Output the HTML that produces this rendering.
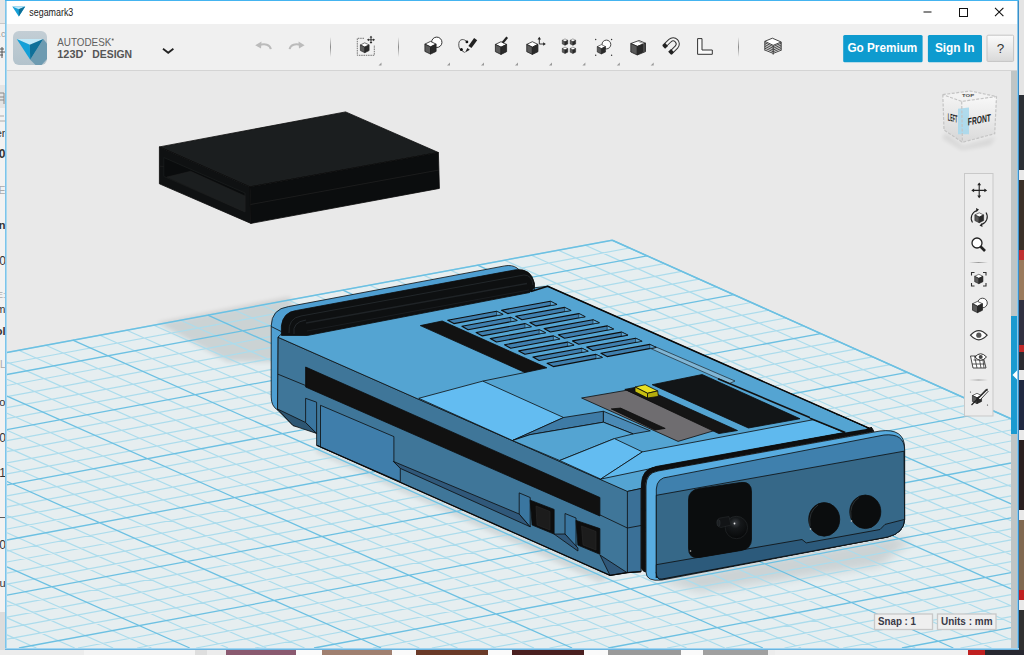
<!DOCTYPE html>
<html><head><meta charset="utf-8"><style>
html,body{margin:0;padding:0;width:1024px;height:655px;overflow:hidden;background:#e8e8e8;}
svg{position:absolute;left:0;top:0;}
text{font-family:"Liberation Sans",sans-serif;}
</style></head><body>
<svg width="1024" height="655" viewBox="0 0 1024 655">
<rect x="0" y="0" width="5" height="23" fill="#e6e6e6"/>
<rect x="0" y="23" width="5" height="1" fill="#c8c8c8"/>
<rect x="0" y="24" width="5" height="625" fill="#f2f2f2"/>
<rect x="1019" y="0" width="5" height="95" fill="#e4e4e4"/>
<rect x="1019" y="95" width="5" height="75" fill="#2b2f35"/>
<rect x="1019" y="180" width="5" height="70" fill="#3a3028"/>
<rect x="1019" y="250" width="5" height="10" fill="#c03030"/>
<rect x="1019" y="260" width="5" height="40" fill="#9a7a5c"/>
<rect x="1019" y="300" width="5" height="45" fill="#303040"/>
<rect x="1019" y="345" width="5" height="7" fill="#c02828"/>
<rect x="1019" y="352" width="5" height="18" fill="#2a2a30"/>
<rect x="1019" y="380" width="5" height="50" fill="#202840"/>
<rect x="1019" y="440" width="5" height="70" fill="#2a2020"/>
<rect x="1019" y="520" width="5" height="70" fill="#806850"/>
<rect x="1019" y="590" width="5" height="10" fill="#c02020"/>
<rect x="1019" y="610" width="5" height="45" fill="#303030"/>
<rect x="0" y="650" width="1024" height="5" fill="#ececec"/>
<rect x="84" y="650" width="111" height="5" fill="#f4f4f4"/>
<rect x="195" y="650" width="12" height="5" fill="#dedede"/>
<rect x="226" y="650" width="70" height="5" fill="#8a5a70"/>
<rect x="296" y="650" width="26" height="5" fill="#fafafa"/>
<rect x="322" y="650" width="70" height="5" fill="#a08070"/>
<rect x="392" y="650" width="24" height="5" fill="#fafafa"/>
<rect x="416" y="650" width="72" height="5" fill="#6a3a28"/>
<rect x="488" y="650" width="24" height="5" fill="#fafafa"/>
<rect x="512" y="650" width="72" height="5" fill="#4a2020"/>
<rect x="584" y="650" width="24" height="5" fill="#fafafa"/>
<rect x="608" y="650" width="73" height="5" fill="#9a9a9a"/>
<rect x="681" y="650" width="22" height="5" fill="#fafafa"/>
<rect x="703" y="650" width="65" height="5" fill="#a0a0a0"/>
<rect x="775" y="650" width="193" height="5" fill="#f0f0f0"/>
<rect x="968" y="650" width="17" height="5" fill="#c02020"/>
<rect x="985" y="650" width="39" height="5" fill="#282830"/>
<rect x="0" y="85" width="5" height="23" fill="#e4e4e4"/>
<rect x="0" y="612" width="5" height="38" fill="#dcdcdc"/>
<g font-family="Liberation Sans" text-anchor="end">
<text x="5.5" y="37" font-size="9" fill="#9a9a9a">.c</text>
<path d="M0 49H4M0 52H5M0 55H3M2 47V58" stroke="#555" stroke-width="1" fill="none"/>
<path d="M0 93H4V104M0 97H4M0 100H4" stroke="#888" stroke-width="1" fill="none"/>
<path d="M0 116H4M0 121H5" stroke="#aaa" stroke-width="1" fill="none"/>
<text x="5.5" y="137" font-size="11" fill="#333">er</text>
<text x="5.5" y="158" font-size="12" font-weight="bold" fill="#333">0</text>
<text x="5.5" y="194" font-size="10" fill="#aaa">E</text>
<text x="5.5" y="229" font-size="11" font-weight="bold" fill="#333">n</text>
<text x="6" y="265" font-size="12" fill="#333">00</text>
<text x="5.5" y="298" font-size="9" fill="#aaa">E:</text>
<text x="5.5" y="313" font-size="11" fill="#333">m</text>
<text x="5.5" y="335" font-size="11" font-weight="bold" fill="#333">ol</text>
<text x="5.5" y="368" font-size="10" fill="#aaa">FL</text>
<text x="5.5" y="406" font-size="11" fill="#333">bo</text>
<text x="6" y="442" font-size="12" fill="#333">60</text>
<text x="6" y="477" font-size="12" fill="#333">01</text>
<text x="5.5" y="516" font-size="11" fill="#333">2_</text>
<text x="6" y="549" font-size="12" fill="#333">00</text>
<text x="5.5" y="587" font-size="11" fill="#333">u</text>
</g>

<rect x="5" y="0" width="1014" height="650" fill="#f0f0f0"/>
<rect x="7" y="1" width="1010" height="23" fill="#ffffff"/>
<rect x="7" y="24" width="1010" height="46" fill="#f0f0f0"/>
<rect x="7" y="70" width="1010" height="1" fill="#d4d4d4"/>
<rect x="7" y="71" width="1004" height="577" fill="#e9e9e9"/>
<path d="M7 352.4L612.2 240.2L1011.0 418.8L1011 648L7 648Z" fill="#e6eef0"/>
<defs>
<filter id="blur3" x="-20%" y="-20%" width="140%" height="140%"><feGaussianBlur stdDeviation="2.5"/></filter>
<filter id="blur5" x="-20%" y="-50%" width="140%" height="200%"><feGaussianBlur stdDeviation="5"/></filter>
<clipPath id="gridclip"><path d="M7 352.4L612.2 240.2L1011.0 418.8L1011 648L7 648Z"/></clipPath>
</defs>
<path d="M157 323L290 297L300 330L282 362L227.5 361.5Z" fill="#000" opacity="0.11" filter="url(#blur3)"/>
<g clip-path="url(#gridclip)">
<path d="M655 580L890 536L912 540L880 566L700 592Z" fill="#000" opacity="0.11" filter="url(#blur5)"/>
<path d="M316 447L610 577L600 582L316 452Z" fill="#000" opacity="0.10" filter="url(#blur3)"/>
</g>

<path d="M612.2 240.2L7.0 352.4M629.6 248.0L7.0 363.5M664.4 263.6L7.0 385.5M681.7 271.3L7.0 396.6M699.1 279.1L7.0 407.6M716.5 286.9L7.0 418.6M751.2 302.5L7.0 440.7M768.6 310.2L7.0 451.7M786.0 318.0L7.0 462.8M803.3 325.8L7.0 473.8M838.0 341.3L7.0 495.9M855.4 349.1L7.0 506.9M872.7 356.9L7.0 517.9M890.1 364.6L7.0 529.0M924.7 380.2L7.0 551.0M942.1 387.9L7.0 562.0M959.4 395.7L7.0 573.1M976.7 403.4L7.0 584.1M1011.0 419.0L7.0 606.1M1011.0 430.0L7.0 617.2M1011.0 441.0L7.0 628.2M1011.0 452.0L7.0 639.2M1011.0 473.9L78.0 648.0M1011.0 484.9L137.1 648.0M1011.0 495.9L196.1 648.0M1011.0 506.9L255.0 648.0M1011.0 528.8L372.9 648.0M1011.0 539.8L431.8 648.0M1011.0 550.8L490.7 648.0M1011.0 561.7L549.5 648.0M1011.0 583.7L667.1 648.0M1011.0 594.7L725.8 648.0M1011.0 605.6L784.5 648.0M1011.0 616.6L843.2 648.0M1011.0 638.5L960.5 648.0M585.3 245.2L1011.0 435.8M558.4 250.2L1011.0 452.8M531.4 255.2L1011.0 469.8M504.5 260.2L1011.0 486.8M450.6 270.2L1011.0 520.8M423.6 275.2L1011.0 537.8M396.7 280.2L1011.0 554.8M369.7 285.2L1011.0 571.8M315.8 295.2L1011.0 605.8M288.8 300.2L1011.0 622.8M261.8 305.2L1011.0 639.8M234.8 310.2L991.4 648.0M180.8 320.2L915.3 648.0M153.8 325.2L877.2 648.0M126.8 330.2L839.1 648.0M99.8 335.2L801.0 648.0M45.7 345.2L724.8 648.0M18.7 350.2L686.6 648.0M7.0 362.1L648.5 648.0M7.0 379.2L610.3 648.0M7.0 413.3L534.0 648.0M7.0 430.3L495.8 648.0M7.0 447.4L457.5 648.0M7.0 464.5L419.3 648.0M7.0 498.6L342.8 648.0M7.0 515.6L304.6 648.0M7.0 532.7L266.3 648.0M7.0 549.7L228.0 648.0M7.0 583.8L151.4 648.0M7.0 600.9L113.1 648.0M7.0 617.9L74.7 648.0M7.0 634.9L36.4 648.0" stroke="#acdcec" stroke-width="1.25" fill="none"/>
<path d="M647.0 255.8L7.0 374.5M733.9 294.7L7.0 429.7M820.7 333.6L7.0 484.8M907.4 372.4L7.0 540.0M994.0 411.2L7.0 595.1M1011.0 463.0L18.9 648.0M1011.0 517.8L314.0 648.0M1011.0 572.7L608.3 648.0M1011.0 627.6L901.9 648.0M612.2 240.2L1011.0 418.8M477.5 265.2L1011.0 503.8M342.8 290.2L1011.0 588.8M207.8 315.2L953.3 648.0M72.8 340.2L762.9 648.0M7.0 396.2L572.1 648.0M7.0 481.5L381.1 648.0M7.0 566.8L189.7 648.0" stroke="#6cc0e2" stroke-width="1.3" fill="none"/>
<path d="M612.2 240.2L7.0 352.4M612.2 240.2L1011.0 418.8" stroke="#6cc0e2" stroke-width="1.5" fill="none"/>

<g stroke="#0d0d0d" stroke-width="0.8" stroke-linejoin="round">
<!-- black box -->
<path d="M159.4 146.9L345.6 111.9L438.4 152.5L250 186.9Z" fill="#1b1e1f"/>
<path d="M159.4 146.9L250 186.9L250.9 223.4L159.4 183.8Z" fill="#0f1112"/>
<path d="M250 186.9L438.4 152.5L439.4 188.4L250.9 223.4Z" fill="#0b0d0e"/>
<path d="M163.8 157.5L245 193L245 211.9L163.8 176.4Z" fill="#0a0c0d" stroke="#1e2122" stroke-width="0.6"/>
<path d="M167 177L190.6 171.3L245 196L245 211.9Z" fill="#1b1e1f" stroke="#222" stroke-width="0.5"/>
<path d="M159.4 166.2L163.8 166.5" fill="none" stroke="#222" stroke-width="0.6"/>
<path d="M250.5 204.5L439 170" fill="none" stroke="#222" stroke-width="0.7"/>
</g>
<g stroke="#0d0d0d" stroke-width="0.8" stroke-linejoin="round">
<!-- side face (long side) -->
<path d="M277.9 337.2L627.4 491.1L641 488L641 572L627.4 572.6L610 575.4L316.6 445.2L316.6 433.4L305.6 427.3L293.1 425.6L277.5 410Z" fill="#3f7699"/>
<!-- rim side band left -->
<!-- crease -->
<path d="M277.5 374L305.6 385.5" fill="none"/>
<path d="M599.9 514.9L627.4 528" fill="none"/>
<!-- black stripe side -->
<path d="M305.6 367L599.9 497.5L599.9 516L305.6 387Z" fill="#111"/>
<!-- left bottom chamfer -->
<path d="M277.5 409L293.1 425.6L316.6 433.4L305.6 422.5Z" fill="#2d5673"/>
<!-- left recess -->
<path d="M305.6 398.3L316.6 402.2L316.6 433.4L305.6 422.5Z" fill="#3a76a0"/>
<path d="M320.5 405.3L393.9 436.6L393.9 461.4L400.3 468.4L400.3 481.7L320.5 447Z" fill="#3f7eab"/>
<path d="M393.3 461.4L400.3 468.4L530.2 526.8L519.2 514Z" fill="#30587a"/>
<!-- port frames & ports -->
<path d="M519.2 492.9L530.2 497.5L530.2 526.8L519.2 514Z" fill="#3a76a0"/>
<path d="M565 513.5L576 518L576 548L565 534Z" fill="#3a76a0"/>
<path d="M554.1 534.1L565 534L577.9 548L577.9 551Z" fill="#30587a"/>
<path d="M600 555L627 572.6L610 575.4Z" fill="#30587a"/>
<path d="M530.2 500.2L554.1 509.4L554.1 534.1L532.1 525Z" fill="#0d0d0d"/>
<path d="M576 520.4L599.9 528.6L599.9 554.3L577.9 545.1Z" fill="#0d0d0d"/>
<path d="M536 506L550 511.5L550 530L537 525Z" fill="#1c1c1c" stroke="#2a2a2a" stroke-width="0.6"/>
<path d="M581.5 526L596 531.5L596 550L583 545Z" fill="#1c1c1c" stroke="#2a2a2a" stroke-width="0.6"/>
<!-- top surface -->
<path d="M277.9 337.2L290 316L547.7 286.25L869 428.3L650 468.75L641 488.5L627.4 491.4Z" fill="#54a4d2"/>
<!-- black stripe top -->
<path d="M420.3 325.6L442.2 321L546.9 367.8L525 372.5Z" fill="#121212"/>
<!-- light insert 1 -->
<path d="M418.75 398.3L482.8 381.1L563.6 417.5L512.5 440.5Z" fill="#63bcf1"/>
<path d="M482.8 381.1L525 372.5" fill="none"/>
<!-- pocket -->
<path d="M563.6 417.5L603.4 411.25L603.4 422.2L530 434.7L512.5 440.5Z" fill="#3e7ba6"/>
<path d="M603.4 411.25L650.3 430.8L633.1 433.9L603.4 422.2Z" fill="#4a8ab6"/>
<path d="M530 434.7L603.4 422.2L633.1 433.9L614.4 438.6L559.7 460.5L512.5 440.5Z" fill="#54a4d2"/>
<!-- light insert 2 -->
<path d="M559.7 460.5L614.4 438.6L642.5 451.9L600.7 479.1Z" fill="#63bcf1"/>
<!-- light front strip -->
<path d="M600.7 479.1L642.4 451.9L838.8 414.9L869 428.3L869 431L650 468.75Z" fill="#5fb9ee"/>
<!-- gray panel -->
<path d="M581.6 398L626.9 390.2L716.25 430L678.1 441.4Z" fill="#6f6d70"/>
<path d="M611.25 408.9L620.6 408.1L665.2 428.4L655 430Z" fill="#151515"/>
<path d="M624.8 389.4L640 386.5L737.5 430.5L718.75 433.6Z" fill="#151515"/>
<!-- black panel -->
<path d="M652.2 384.7L702.2 374.5L800 418.75L748.4 428Z" fill="#121517"/>
<!-- side raised strip along right edge -->
<path d="M650.6 348.5L656 347L735 381L729.5 383.5Z" fill="#80b6d6" stroke-width="0.6"/>
<!-- yellow button -->
<path d="M635 387L645.2 384.7L657.7 390.9L647.5 393.3Z" fill="#e8e020"/>
<path d="M635 387L647.5 393.3L647.5 398L635 391.7Z" fill="#c8c010"/>
<path d="M647.5 393.3L657.7 390.9L658.4 396.4L647.5 398Z" fill="#b4ac0c"/>
</g>

<g stroke="#0d0d0d" stroke-width="0.8" stroke-linejoin="round">
<!-- rim -->
<path d="M277.5 410Q271.2 406 271.2 397L271.2 326Q271.5 309 288.4 306.6L504.7 265.9Q512 264.5 517 268L534 283L534.4 290L281.4 334L277.9 337.2Z" fill="#4f9fd2"/>
<path d="M271.2 326.5L281.4 331.6" fill="none"/>
<!-- rail -->
<path d="M281.4 335.4L281.4 326Q283 312 296.25 310.5L515.6 269.8Q531 268 534.4 283.1L534.4 287.8L529.7 292.5L307.2 335.5Z" fill="#0e1011"/>
<path d="M289 333Q288 318 301 316L524 275Q532 275 533 285" fill="none" stroke="#22272a" stroke-width="1"/>
<path d="M306 323L527 283.5" fill="none" stroke="#1f2326" stroke-width="1.4"/>
<path d="M307 331L529 290" fill="none" stroke="#1a1d20" stroke-width="1"/>
<path d="M294 334Q292 322 306 320" fill="none" stroke="#2a2f33" stroke-width="0.8"/>
<path d="M447.7 320.2L496.6 311.3L502.8 314.4L453.9 323.6Z" fill="#3f7fae" stroke-width="1.1"/>
<path d="M496.6 311.3L502.8 314.4L496.6 315.4Z" fill="#5aa9da" stroke-width="0.5"/>
<path d="M501.5 310.2L550.4 301.3L556.6 304.4L507.7 313.6Z" fill="#3f7fae" stroke-width="1.1"/>
<path d="M550.4 301.3L556.6 304.4L550.4 305.4Z" fill="#5aa9da" stroke-width="0.5"/>
<path d="M461.9 326.3L510.8 317.4L517.0 320.5L468.1 329.7Z" fill="#3f7fae" stroke-width="1.1"/>
<path d="M510.8 317.4L517.0 320.5L510.8 321.5Z" fill="#5aa9da" stroke-width="0.5"/>
<path d="M515.7 316.3L564.6 307.4L570.8 310.5L521.9 319.7Z" fill="#3f7fae" stroke-width="1.1"/>
<path d="M564.6 307.4L570.8 310.5L564.6 311.5Z" fill="#5aa9da" stroke-width="0.5"/>
<path d="M476.1 332.5L525.0 323.6L531.2 326.7L482.3 335.9Z" fill="#3f7fae" stroke-width="1.1"/>
<path d="M525.0 323.6L531.2 326.7L525.0 327.7Z" fill="#5aa9da" stroke-width="0.5"/>
<path d="M529.9 322.5L578.8 313.6L585.0 316.7L536.1 325.9Z" fill="#3f7fae" stroke-width="1.1"/>
<path d="M578.8 313.6L585.0 316.7L578.8 317.7Z" fill="#5aa9da" stroke-width="0.5"/>
<path d="M490.3 338.6L539.2 329.8L545.4 332.8L496.5 342.0Z" fill="#3f7fae" stroke-width="1.1"/>
<path d="M539.2 329.8L545.4 332.8L539.2 333.8Z" fill="#5aa9da" stroke-width="0.5"/>
<path d="M544.1 328.6L593.0 319.8L599.2 322.8L550.3 332.0Z" fill="#3f7fae" stroke-width="1.1"/>
<path d="M593.0 319.8L599.2 322.8L593.0 323.8Z" fill="#5aa9da" stroke-width="0.5"/>
<path d="M504.5 344.8L553.4 335.9L559.6 339.0L510.7 348.2Z" fill="#3f7fae" stroke-width="1.1"/>
<path d="M553.4 335.9L559.6 339.0L553.4 340.0Z" fill="#5aa9da" stroke-width="0.5"/>
<path d="M558.3 334.8L607.2 325.9L613.4 329.0L564.5 338.2Z" fill="#3f7fae" stroke-width="1.1"/>
<path d="M607.2 325.9L613.4 329.0L607.2 330.0Z" fill="#5aa9da" stroke-width="0.5"/>
<path d="M518.7 350.9L567.6 342.1L573.8 345.1L524.9 354.3Z" fill="#3f7fae" stroke-width="1.1"/>
<path d="M567.6 342.1L573.8 345.1L567.6 346.1Z" fill="#5aa9da" stroke-width="0.5"/>
<path d="M572.5 340.9L621.4 332.1L627.6 335.1L578.7 344.3Z" fill="#3f7fae" stroke-width="1.1"/>
<path d="M621.4 332.1L627.6 335.1L621.4 336.1Z" fill="#5aa9da" stroke-width="0.5"/>
<path d="M532.9 357.1L581.8 348.2L588.0 351.3L539.1 360.5Z" fill="#3f7fae" stroke-width="1.1"/>
<path d="M581.8 348.2L588.0 351.3L581.8 352.3Z" fill="#5aa9da" stroke-width="0.5"/>
<path d="M586.7 347.1L635.6 338.2L641.8 341.3L592.9 350.5Z" fill="#3f7fae" stroke-width="1.1"/>
<path d="M635.6 338.2L641.8 341.3L635.6 342.3Z" fill="#5aa9da" stroke-width="0.5"/>
<path d="M547.1 363.2L596.0 354.4L602.2 357.4L553.3 366.6Z" fill="#3f7fae" stroke-width="1.1"/>
<path d="M596.0 354.4L602.2 357.4L596.0 358.4Z" fill="#5aa9da" stroke-width="0.5"/>
<path d="M600.9 353.2L649.8 344.4L656.0 347.4L607.1 356.6Z" fill="#3f7fae" stroke-width="1.1"/>
<path d="M649.8 344.4L656.0 347.4L649.8 348.4Z" fill="#5aa9da" stroke-width="0.5"/>
<!-- front: body front short face -->
<path d="M627.4 491.4L641 488.5L641 571.5L627.4 572.6Z" fill="#3a7097"/>
<path d="M627.4 528L641 525.5" fill="none"/>
<!-- gasket black -->
<path d="M641.4 568L641.4 484Q642 468.5 656 467L872 428L874 431.5L658 471Q645.6 473 645.6 486L645.6 572Q643 572 641.4 568Z" fill="#0e0f10"/>
<!-- front face outer -->
<path d="M646 572L646 486Q646 473 658 471L880 431Q904.6 428 904.6 448L904.6 519.4Q904 533 887.6 537L662 580Q646 582 646 572Z" fill="#58ace0"/>
<!-- frame band -->
<path d="M656.3 578L656.3 489Q657 477.5 668.75 476.9L884 435Q904.6 433 904.6 450L904.6 519.4Q904 533 887.6 537L662 579Q656.3 580 656.3 572Z" fill="#3f80ad"/>
<!-- inner face -->
<path d="M656.3 495.3L904 451.2L904.6 519.4Q904 533 887.6 537L662 579Q656.3 580 656.3 572Z" fill="#366888"/>
<!-- bottom bevel -->
<path d="M656.3 564.7L802 539.5L806.2 542.9L880 529.5L885 524.4L904.6 519.4Q904 533 887.6 537L662 579Q656.3 580 656.3 572Z" fill="#2c5a7b"/>
<!-- joystick housing -->
<path d="M699.5 488.5L740.5 482.5Q751.5 481 751.5 492L751.5 539Q751.5 549 741 550.5L699 557.5Q688.5 559 688.5 548L688.5 500Q688.5 490 699.5 488.5Z" fill="#0b0d0e"/>
<defs><radialGradient id="ballG" cx="0.45" cy="0.3" r="0.7"><stop offset="0" stop-color="#3a3e42"/><stop offset="0.35" stop-color="#15181a"/><stop offset="1" stop-color="#070809"/></radialGradient></defs>
<circle cx="736.4" cy="527.5" r="11.2" fill="url(#ballG)" stroke="#2c3033" stroke-width="0.5"/>
<path d="M717.5 523.5Q716 519 720 518L729 516.5L731 525L721 527.5Q718.5 528 717.5 523.5Z" fill="#121416" stroke="#2a2e31" stroke-width="0.5"/>
<ellipse cx="718.5" cy="523" rx="1.6" ry="3.3" fill="#1c1f22" stroke="#3a3e41" stroke-width="0.4"/>
<circle cx="734.5" cy="523.5" r="0.9" fill="#e8e8e8" stroke="none"/>
<circle cx="690.5" cy="551" r="0.8" fill="#bbb" stroke="none"/>
<!-- buttons -->
<ellipse cx="824.2" cy="519.4" rx="15.5" ry="16.8" fill="#0b0d0e"/><path d="M810 526Q808 512 818 505" fill="none" stroke="#3a3f42" stroke-width="0.7"/><circle cx="810.5" cy="529" r="0.8" fill="#ccc" stroke="none"/>
<ellipse cx="865.3" cy="511.8" rx="15.5" ry="16.8" fill="#0b0d0e"/><path d="M851 518Q849 504 859 497.5" fill="none" stroke="#3a3f42" stroke-width="0.7"/><circle cx="851.5" cy="521" r="0.8" fill="#ccc" stroke="none"/>
<!-- front top band -->
<path d="M650 468.75L869 428.3L872 427.5L656 466.5Z" fill="#111"/>
</g>
<path d="M531 291.5L547.7 286.25L869 428.3" fill="none" stroke="#0a0a0a" stroke-width="1.5" stroke-linejoin="round"/>
<path d="M316.6 445.2L610 575.4L627.4 572.6L641 571.5" fill="none" stroke="#0a0a0a" stroke-width="1.2"/>
<path d="M718 378.8L845.3 432.5" fill="none" stroke="#111" stroke-width="1.6"/>
<path d="M810 403.5L867.7 428.8L845.3 432.5L810 418.2Z" fill="#54a4d2" stroke="none"/>
<path d="M810 418.2L845.3 432.5" fill="none" stroke="#111" stroke-width="1.6"/>

<defs>
<symbol id="cube" viewBox="0 0 12 13.5" overflow="visible">
<path d="M6 0.4L11.6 3.1L6 5.9L0.4 3.1Z" fill="#fff" stroke="#222" stroke-width="0.8" stroke-linejoin="round"/>
<path d="M0.4 3.1L6 5.9L6 13.1L0.4 10.4Z" fill="#5a5a5a" stroke="#222" stroke-width="0.8" stroke-linejoin="round"/>
<path d="M11.6 3.1L6 5.9L6 13.1L11.6 10.4Z" fill="#2a2a2a" stroke="#222" stroke-width="0.8" stroke-linejoin="round"/>
</symbol>
<linearGradient id="logoG" x1="0" y1="0" x2="0" y2="1"><stop offset="0" stop-color="#c3ced5"/><stop offset="1" stop-color="#b3c3cc"/></linearGradient>
<linearGradient id="qG" x1="0" y1="0" x2="0" y2="1"><stop offset="0" stop-color="#fbfbfb"/><stop offset="1" stop-color="#d9d9d9"/></linearGradient>
<linearGradient id="sepG" x1="0" y1="0" x2="0" y2="1"><stop offset="0" stop-color="#f0f0f0"/><stop offset="0.5" stop-color="#8a8a8a"/><stop offset="1" stop-color="#f0f0f0"/></linearGradient>
<linearGradient id="nsepG" x1="0" y1="0" x2="1" y2="0"><stop offset="0" stop-color="#ececec"/><stop offset="0.5" stop-color="#9a9a9a"/><stop offset="1" stop-color="#ececec"/></linearGradient>
</defs>
<!-- title bar -->
<path d="M12.3 6.4L25.2 6.4L18.8 16.4Z" fill="#16a0d8"/>
<path d="M12.3 6.4L25.2 6.4L18.8 9.2Z" fill="#bfe6f7"/>
<path d="M25.2 6.4L18.8 9.2L18.8 16.4Z" fill="#0e6f96"/>
<text x="29.3" y="15.8" font-size="10.6" fill="#222" textLength="44" lengthAdjust="spacingAndGlyphs">segamark3</text>
<rect x="923.5" y="11.5" width="8" height="1" fill="#111"/>
<rect x="959.5" y="8.5" width="8" height="8" fill="none" stroke="#111" stroke-width="1"/>
<path d="M995 7.8L1003.4 16.2M1003.4 7.8L995 16.2" stroke="#111" stroke-width="1.1"/>
<!-- logo -->
<rect x="13" y="31" width="34" height="34" rx="6" fill="url(#logoG)"/>
<path d="M43.3 39L47 43.5L47 59L41.5 65L35.5 65L30.2 59.8Z" fill="#6e9bb1"/>
<path d="M16.7 39L43.3 39L29.8 44.8Z" fill="#c2e9f8"/>
<path d="M16.7 39L29.8 44.8L30.2 59.8Z" fill="#14a0d8"/>
<path d="M43.3 39L29.8 44.8L30.2 59.8Z" fill="#0f7099"/>
<text x="57.3" y="46.1" font-size="11.2" fill="#606060" textLength="54" lengthAdjust="spacingAndGlyphs">AUTODESK</text>
<rect x="111.8" y="38.6" width="1.8" height="1.8" fill="#666"/>
<text x="57.3" y="57.8" font-size="11.2" font-weight="bold" fill="#555" textLength="26" lengthAdjust="spacingAndGlyphs">123D</text>
<rect x="84.2" y="50.2" width="1.8" height="1.8" fill="#555"/>
<text x="92.3" y="57.8" font-size="11.2" font-weight="bold" fill="#555" textLength="39.8" lengthAdjust="spacingAndGlyphs">DESIGN</text>
<path d="M163 48.8L168.2 52.8L173.4 48.8" fill="none" stroke="#222" stroke-width="1.8"/>
<!-- undo redo -->
<path d="M270.8 49.2C270 44.5 265 43.2 258.5 45.4" fill="none" stroke="#bbb" stroke-width="2"/>
<path d="M255.2 45.2L261.5 41.6L261 48.6Z" fill="#bbb"/>
<path d="M289.6 49.2C290.4 44.5 295.4 43.2 301.9 45.4" fill="none" stroke="#bbb" stroke-width="2"/>
<path d="M304.6 45.2L298.5 41.6L299 48.6Z" fill="#bbb"/>
<rect x="330" y="37" width="1" height="20" fill="url(#sepG)"/>
<rect x="398" y="37" width="1" height="20" fill="url(#sepG)"/>
<rect x="738" y="37" width="1" height="20" fill="url(#sepG)"/>
<!-- add icon -->
<path d="M364 38.3L357.3 38.3L357.3 55.3L374.3 55.3L374.3 45" fill="none" stroke="#666" stroke-width="0.9" stroke-dasharray="1.5 0.8"/>
<use href="#cube" x="360" y="42.5" width="9.5" height="10.5"/>
<path d="M371 37L371 42.6M368.2 39.8L373.8 39.8" stroke="#333" stroke-width="1"/><path d="M371 35.8L369.6 37.6L372.4 37.6ZM371 43.8L369.6 42L372.4 42ZM367 39.8L368.8 38.4L368.8 41.2ZM375 39.8L373.2 38.4L373.2 41.2Z" fill="#222"/>
<!-- primitives -->
<circle cx="436.75" cy="42.3" r="5.2" fill="#fff" stroke="#333" stroke-width="1"/>
<use href="#cube" x="424.25" y="41" width="12.5" height="13.5"/>
<!-- sketch -->
<path d="M466.9 41.9C464.5 38.5 459.2 38.6 458.8 43.5C458.5 47 459.5 49.5 461.4 50.3L464.7 52.5" fill="none" stroke="#555" stroke-width="1"/>
<circle cx="466.9" cy="41.9" r="1.4" fill="#111"/>
<circle cx="461.4" cy="49.6" r="1.5" fill="#111"/>
<path d="M468.4 46.1L474.1 38L477.2 40.2L471.45 48.1Z" fill="#222"/>
<path d="M467.4 48.1L469.8 49.8L465.1 52.5Z" fill="#222"/>
<!-- construct -->
<use href="#cube" x="494.9" y="41.3" width="12.2" height="13.5"/>
<path d="M502.6 42.8L507.2 37.2" stroke="#222" stroke-width="2.2"/>
<!-- modify -->
<use href="#cube" x="526.1" y="41.3" width="12.5" height="13.5"/>
<path d="M539.3 44L539.3 38.5M539.3 44L544 44" stroke="#333" stroke-width="1"/>
<path d="M539.3 36.8L537.6 39.4L541 39.4Z" fill="#222"/>
<path d="M545.8 44L543.2 42.3L543.2 45.7Z" fill="#222"/>
<!-- pattern -->
<use href="#cube" x="562" y="38.6" width="6" height="7"/>
<use href="#cube" x="569.9" y="38.6" width="6" height="7"/>
<use href="#cube" x="562" y="46.8" width="6" height="7"/>
<use href="#cube" x="569.9" y="46.8" width="6" height="7"/>
<!-- grouping -->
<circle cx="595.7" cy="39.5" r="0.7" fill="#333"/><circle cx="611.6" cy="39.5" r="0.7" fill="#333"/>
<circle cx="595.7" cy="55.2" r="0.7" fill="#333"/><circle cx="611.6" cy="55.2" r="0.7" fill="#333"/>
<circle cx="606.4" cy="44.5" r="4.4" fill="#fff" stroke="#333" stroke-width="0.9"/>
<use href="#cube" x="596.6" y="44.3" width="9.6" height="10"/>
<!-- combine -->
<path d="M630.8 43.5L639 40.5L645.5 43.2L637.3 46.4Z" fill="#fff" stroke="#222" stroke-width="0.8"/>
<path d="M630.8 43.5L637.3 46.4L637.3 55L630.8 52Z" fill="#5a5a5a" stroke="#222" stroke-width="0.8"/>
<path d="M645.5 43.2L637.3 46.4L637.3 55L645.5 51.6Z" fill="#2a2a2a" stroke="#222" stroke-width="0.8"/>
<path d="M638.5 41.5L644 43.8L644 52" stroke="#777" stroke-width="0.8" fill="none"/>
<!-- snap magnet -->
<path d="M663.8 46.6L670 40.6A4.6 4.6 0 0 1 676.5 47.1L670.3 53.3" fill="none" stroke="#333" stroke-width="4.2"/>
<path d="M663.8 46.6L670 40.6A4.6 4.6 0 0 1 676.5 47.1L670.3 53.3" fill="none" stroke="#f4f4f4" stroke-width="2.2"/>
<path d="M662.3 45.8L665.2 43L668 45.9L665.1 48.7Z" fill="#222"/>
<path d="M668.2 51.8L671 49L673.9 51.9L671.1 54.7Z" fill="#222"/>
<!-- measure -->
<path d="M697.6 38.6L702 38.6L702 50L712.3 50L712.3 54.3L697.6 54.3Z" fill="#fafafa" stroke="#333" stroke-width="1"/>
<!-- layers -->
<g stroke="#333" stroke-width="0.9" fill="none">
<path d="M764.8 41.3L772.4 38.2L781.2 42L773.2 45.3Z" fill="#fff"/>
<path d="M764.8 42.8L773.2 46.6L781.2 43.3M764.8 44.6L773.2 48.3L781.2 45M764.8 46.4L773.2 50L781.2 46.7M764.8 48.2L773.2 51.7L781.2 48.5M764.8 50L773.2 53.4L781.2 50.2M764.8 41.3L764.8 50.5M773.2 45.3L773.2 54.6M781.2 42L781.2 50.5"/>
</g>
<!-- corner marks -->
<g fill="#999">
<path d="M378.5 65.5L381.5 62.5L381.5 65.5Z"/>
<path d="M447 65.5L450 62.5L450 65.5Z"/>
<path d="M481 65.5L484 62.5L484 65.5Z"/>
<path d="M515 65.5L518 62.5L518 65.5Z"/>
<path d="M549 65.5L552 62.5L552 65.5Z"/>
<path d="M582.4 65.5L585.4 62.5L585.4 65.5Z"/>
<path d="M616.8 65.5L619.8 62.5L619.8 65.5Z"/>
<path d="M650.7 65.5L653.7 62.5L653.7 65.5Z"/>
</g>
<!-- buttons -->
<rect x="843.2" y="34.9" width="79.4" height="27.3" rx="1.5" fill="#0e9bcf"/>
<text x="847.4" y="52" font-size="12.3" font-weight="bold" fill="#fff" textLength="69.9" lengthAdjust="spacingAndGlyphs">Go Premium</text>
<rect x="927.9" y="34.9" width="54.1" height="27.3" rx="1.5" fill="#0e9bcf"/>
<text x="934.9" y="52" font-size="12.3" font-weight="bold" fill="#fff" textLength="39.5" lengthAdjust="spacingAndGlyphs">Sign In</text>
<rect x="987" y="35.2" width="26.6" height="26.2" rx="1" fill="url(#qG)" stroke="#c4c4c4" stroke-width="1"/>
<text x="996.8" y="52.8" font-size="13.5" fill="#333">?</text>
<!-- right sidebar strip -->
<rect x="1011" y="71" width="7" height="577" fill="#bfc5c5"/>
<rect x="1011" y="316" width="7" height="118" fill="#1a9ad0"/>
<path d="M1012.5 375L1017 370.5L1017 379.5Z" fill="#fff"/>

<defs>
<linearGradient id="vcL" x1="0" y1="0" x2="0" y2="1"><stop offset="0" stop-color="#f4f4f4"/><stop offset="1" stop-color="#d6d6d6"/></linearGradient>
<linearGradient id="vcF" x1="0" y1="0" x2="0" y2="1"><stop offset="0" stop-color="#f8f8f8"/><stop offset="1" stop-color="#dadada"/></linearGradient>
<filter id="vcsh" x="-30%" y="-30%" width="160%" height="160%"><feGaussianBlur stdDeviation="2"/></filter>
</defs>
<!-- viewcube -->
<path d="M946 133L963 146L996 137L990 145L962 150L942 138Z" fill="#000" opacity="0.08" filter="url(#vcsh)"/>
<path d="M942.8 94.6L970.3 91L996.5 96.5L961.7 101.4Z" fill="#f2f2f2"/>
<path d="M942.8 94.6L961.7 101.4L962.4 142.3L944 130Z" fill="url(#vcL)"/>
<path d="M961.7 101.4L996.5 96.5L994.7 133.7L962.4 142.3Z" fill="url(#vcF)"/>
<path d="M958 108.7L969 107.5L969 134.3L958 134.3Z" fill="#a8d8ec" opacity="0.9"/>
<g fill="none" stroke="#c4c4c4" stroke-width="1.2" stroke-dasharray="3 1.5">
<path d="M942.8 94.6L970.3 91L996.5 96.5L961.7 101.4Z"/>
<path d="M942.8 94.6L944 130L962.4 142.3L994.7 133.7L996.5 96.5"/>
<path d="M961.7 101.4L962.4 142.3"/>
</g>
<text x="0" y="0" font-size="10" font-weight="bold" fill="#222" textLength="16" lengthAdjust="spacingAndGlyphs" transform="translate(947.8 120.5) skewY(14) scale(0.6 1.05)">LEFT</text>
<text x="0" y="0" font-size="10.5" font-weight="bold" fill="#222" textLength="23" lengthAdjust="spacingAndGlyphs" transform="translate(967.8 125.6) skewY(-11)">FRONT</text>
<text x="0" y="0" font-size="6" font-weight="bold" fill="#444" transform="translate(962 96.5) scale(1 0.5)">TOP</text>
<!-- nav bar -->
<rect x="964.5" y="173.5" width="28.5" height="242.5" fill="#ececec" stroke="#c9c9c9" stroke-width="1"/>
<rect x="969" y="262" width="19" height="1" fill="url(#nsepG)"/>
<rect x="969" y="379.5" width="19" height="1" fill="url(#nsepG)"/>
<!-- pan -->
<g stroke="#222" stroke-width="1.1" fill="#222">
<path d="M979.2 183.5L979.2 197.3M972.3 190.4L986.1 190.4" fill="none"/>
<path d="M979.2 182.5L977.3 185.3L981.1 185.3Z" stroke="none"/>
<path d="M979.2 198.3L977.3 195.5L981.1 195.5Z" stroke="none"/>
<path d="M971.3 190.4L974.1 188.5L974.1 192.3Z" stroke="none"/>
<path d="M987.1 190.4L984.3 188.5L984.3 192.3Z" stroke="none"/>
</g>
<!-- orbit -->
<use href="#cube" x="974.5" y="212.5" width="9.5" height="10.5"/>
<path d="M972.5 222.5A8 8 0 0 1 977 210.5M986 212.5A8 8 0 0 1 981.5 224.5" fill="none" stroke="#222" stroke-width="1.1"/>
<path d="M979 209.5L976 208L976.5 212Z" fill="#222"/>
<path d="M979.5 225.5L982.5 227L982 223Z" fill="#222"/>
<!-- zoom -->
<circle cx="977" cy="243" r="5" fill="#fff" stroke="#222" stroke-width="1.3"/>
<path d="M980.5 246.5L985 251" stroke="#222" stroke-width="2.6"/>
<!-- fit -->
<path d="M971.5 275.5L971.5 272.5L974.5 272.5M983 272.5L986 272.5L986 275.5M986 283L986 286L983 286M974.5 286L971.5 286L971.5 283" fill="none" stroke="#333" stroke-width="1.1"/>
<use href="#cube" x="974.3" y="274" width="9" height="10"/>
<!-- primitive view -->
<circle cx="982.5" cy="303" r="4.8" fill="#fff" stroke="#333" stroke-width="0.9"/>
<use href="#cube" x="972" y="301" width="11" height="12"/>
<!-- eye -->
<path d="M970.5 335.2Q978.8 326 987.1 335.2Q978.8 344.4 970.5 335.2Z" fill="#fff" stroke="#333" stroke-width="1.2"/>
<circle cx="978.8" cy="335.2" r="2.6" fill="#555"/>
<!-- grid eye -->
<path d="M970.5 356L983 356L986 368L973 368Z" fill="#fff" stroke="#333" stroke-width="0.9"/>
<path d="M973.5 360L984 360M972 364L985 364M974.5 356L977 368M978.8 356L981 368M982.5 356L984 368" stroke="#333" stroke-width="0.8" fill="none"/>
<path d="M975 357Q980.5 350.5 986.5 357Q980.5 363.5 975 357Z" fill="#fff" stroke="#333" stroke-width="1"/>
<circle cx="980.7" cy="357" r="2" fill="#444"/>
<!-- material -->
<use href="#cube" x="972" y="393" width="10" height="11"/>
<path d="M978 398L986 389.5L988 391.5L980 400Z" fill="#fff" stroke="#222" stroke-width="0.9"/>
<path d="M971.5 405L987.5 389" stroke="#222" stroke-width="1.2"/>
<circle cx="970.5" cy="392" r="0.6" fill="#333"/><circle cx="987.5" cy="405" r="0.6" fill="#333"/>
<!-- snap / units -->
<rect x="874.5" y="614" width="58" height="15.5" fill="#efefef" stroke="#c8c8c8" stroke-width="1.3"/>
<text x="878" y="625.4" font-size="11" font-weight="bold" fill="#3a3a48" textLength="38" lengthAdjust="spacingAndGlyphs">Snap : 1</text>
<rect x="937.5" y="614" width="58.5" height="15.5" fill="#efefef" stroke="#c8c8c8" stroke-width="1.3"/>
<text x="941" y="625.4" font-size="11" font-weight="bold" fill="#3a3a48" textLength="51.5" lengthAdjust="spacingAndGlyphs">Units : mm</text>

<rect x="5" y="0" width="1" height="650" fill="#7cc4ea"/>
<rect x="6" y="0" width="1" height="650" fill="#a8d8f0"/>
<rect x="1017" y="0" width="1" height="650" fill="#8cc8ec"/>
<rect x="1018" y="0" width="1" height="650" fill="#3a8fc8"/>
<rect x="5" y="0" width="1014" height="1" fill="#44b4f0"/>
<rect x="5" y="648" width="1014" height="1" fill="#a0d4f0"/>
<rect x="5" y="649" width="1014" height="1" fill="#6ab4e0"/>

</svg>
</body></html>
